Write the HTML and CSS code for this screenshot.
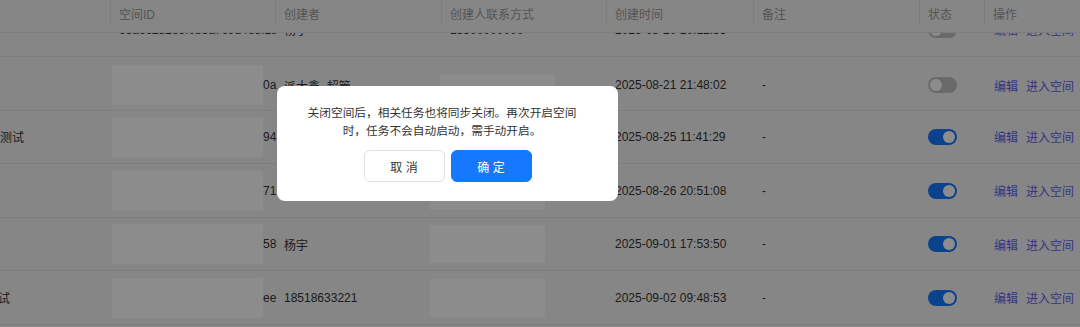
FILE: index.html
```html
<!DOCTYPE html>
<html lang="zh-CN">
<head>
<meta charset="utf-8">
<title>空间列表</title>
<link rel="stylesheet" href="styles.css">
</head>
<body>
<div class="viewport">
  <div class="table">
    <div class="row thead">
      <div class="th">空间名称</div>
      <div class="th">空间ID</div>
      <div class="th">创建者</div>
      <div class="th">创建人联系方式</div>
      <div class="th">创建时间</div>
      <div class="th">备注</div>
      <div class="th">状态</div>
      <div class="th th-last">操作</div>
    </div>
    <div class="tbody">
      <div class="row tr">
        <div class="td">测试空间</div>
        <div class="td id-plain">68a6c2d1e5f0b3a7c9d4e8f1a2</div>
        <div class="td">杨宇</div>
        <div class="td">13800000000</div>
        <div class="td">2025-08-20 10:12:33</div>
        <div class="td">-</div>
        <div class="td"><span class="switch"></span></div>
        <div class="td links"><a>编辑</a><a>进入空间</a></div>
      </div>
      <div class="row tr">
        <div class="td">演示空间</div>
        <div class="td id"><span class="redact"></span><span class="id-tail">0a</span></div>
        <div class="td">派大鑫_超管</div>
        <div class="td contact"><span class="redact-c redact-c-low"></span></div>
        <div class="td">2025-08-21 21:48:02</div>
        <div class="td">-</div>
        <div class="td"><span class="switch"></span></div>
        <div class="td links"><a>编辑</a><a>进入空间</a></div>
      </div>
      <div class="row tr">
        <div class="td">智能客服问答A组测试</div>
        <div class="td id"><span class="redact"></span><span class="id-tail">94</span></div>
        <div class="td">王晓明</div>
        <div class="td contact"><span class="redact-c"></span></div>
        <div class="td">2025-08-25 11:41:29</div>
        <div class="td">-</div>
        <div class="td"><span class="switch on"></span></div>
        <div class="td links"><a>编辑</a><a>进入空间</a></div>
      </div>
      <div class="row tr">
        <div class="td">运营空间</div>
        <div class="td id"><span class="redact"></span><span class="id-tail">71</span></div>
        <div class="td">李娜</div>
        <div class="td contact"><span class="redact-c"></span></div>
        <div class="td">2025-08-26 20:51:08</div>
        <div class="td">-</div>
        <div class="td"><span class="switch on"></span></div>
        <div class="td links"><a>编辑</a><a>进入空间</a></div>
      </div>
      <div class="row tr">
        <div class="td">产品空间</div>
        <div class="td id"><span class="redact"></span><span class="id-tail">58</span></div>
        <div class="td">杨宇</div>
        <div class="td contact"><span class="redact-c"></span></div>
        <div class="td">2025-09-01 17:53:50</div>
        <div class="td">-</div>
        <div class="td"><span class="switch on"></span></div>
        <div class="td links"><a>编辑</a><a>进入空间</a></div>
      </div>
      <div class="row tr">
        <div class="td">运营活动v配置测试</div>
        <div class="td id"><span class="redact"></span><span class="id-tail">ee</span></div>
        <div class="td">18518633221</div>
        <div class="td contact"><span class="redact-c"></span></div>
        <div class="td">2025-09-02 09:48:53</div>
        <div class="td">-</div>
        <div class="td"><span class="switch on"></span></div>
        <div class="td links"><a>编辑</a><a>进入空间</a></div>
      </div>
    </div>
  </div>
</div>

<div class="mask"></div>
<div class="modal" role="dialog">
  <p class="modal-text">关闭空间后，相关任务也将同步关闭。再次开启空间时，任务不会自动启动，需手动开启。</p>
  <div class="modal-actions">
    <button class="btn btn-cancel">取 消</button>
    <button class="btn btn-ok">确 定</button>
  </div>
</div>
</body>
</html>
```

FILE: styles.css
```css
* {
  box-sizing: border-box;
  margin: 0;
  padding: 0;
}

html,
body {
  width: 1080px;
  height: 327px;
  overflow: hidden;
}

body {
  font-family: "Liberation Sans", "Noto Sans CJK SC", sans-serif;
  font-size: 12px;
  color: #333;
  background: #f5f5f5;
}

.viewport {
  width: 1080px;
  height: 327px;
  overflow: hidden;
}

.table {
  width: 1205px;
  margin-left: -100px;
  background: #f5f5f5;
}

.row {
  display: grid;
  grid-template-columns: 211px 165px 166px 165px 147px 166px 65px 120px;
}

.thead {
  position: relative;
  z-index: 1;
  height: 33px;
  background: #f5f5f5;
  border-bottom: 1px solid #e4e4e4;
  color: #9a9a9a;
}

.th {
  position: relative;
  padding-left: 8px;
  line-height: 31px;
  white-space: nowrap;
}

.th::after {
  content: "";
  position: absolute;
  right: 0;
  top: 1px;
  width: 1px;
  height: 24px;
  background: #e2e2e2;
}

.th-last::after {
  display: none;
}

.tbody {
  margin-top: -29.5px;
}

.tr {
  height: 53.6px;
  border-bottom: 1px solid #e4e4e4;
}

.td {
  display: flex;
  align-items: center;
  padding-left: 8px;
  white-space: nowrap;
}

.id-plain {
  overflow: hidden;
}

.id {
  padding-left: 1px;
}

.redact {
  flex: none;
  width: 151px;
  height: 40px;
  background: #ffffff;
}

.id-tail {
  flex: none;
}

.contact {
  padding-left: 0;
}

.redact-c {
  flex: none;
  width: 115px;
  height: 38px;
  margin-left: -12px;
  background: #ffffff;
}

.redact-c-low {
  margin-left: -2px;
  margin-top: 18px;
}

.switch {
  position: relative;
  display: block;
  width: 29px;
  height: 16px;
  border-radius: 8px;
  background: #c2c2c2;
}

.switch::after {
  content: "";
  position: absolute;
  top: 2px;
  left: 2px;
  width: 12px;
  height: 12px;
  border-radius: 50%;
  background: #fff;
}

.switch.on {
  background: #1677ff;
}

.switch.on::after {
  left: 15px;
}

.links {
  gap: 8px;
  padding-left: 9px;
}

.links a {
  color: #625ff0;
  cursor: pointer;
}

.mask {
  position: fixed;
  inset: 0;
  z-index: 10;
  background: rgba(0, 0, 0, 0.45);
}

.modal {
  position: fixed;
  z-index: 11;
  left: 277px;
  top: 86px;
  width: 341px;
  padding: 18px 0 19px;
  background: #fff;
  border-radius: 8px;
  text-align: center;
}

.modal-text {
  width: 276px;
  margin-left: 27px;
  font-size: 11.7px;
  line-height: 18px;
  color: #333;
}

.modal-actions {
  display: flex;
  justify-content: center;
  gap: 6px;
  margin-top: 10px;
}

.btn {
  width: 81px;
  height: 32px;
  border-radius: 6px;
  font-family: inherit;
  font-size: 12px;
  cursor: pointer;
}

.btn-cancel {
  background: #fff;
  border: 1px solid #e0e0e0;
  color: #333;
}

.btn-ok {
  background: #1677ff;
  border: 1px solid #1677ff;
  color: #fff;
}
```
